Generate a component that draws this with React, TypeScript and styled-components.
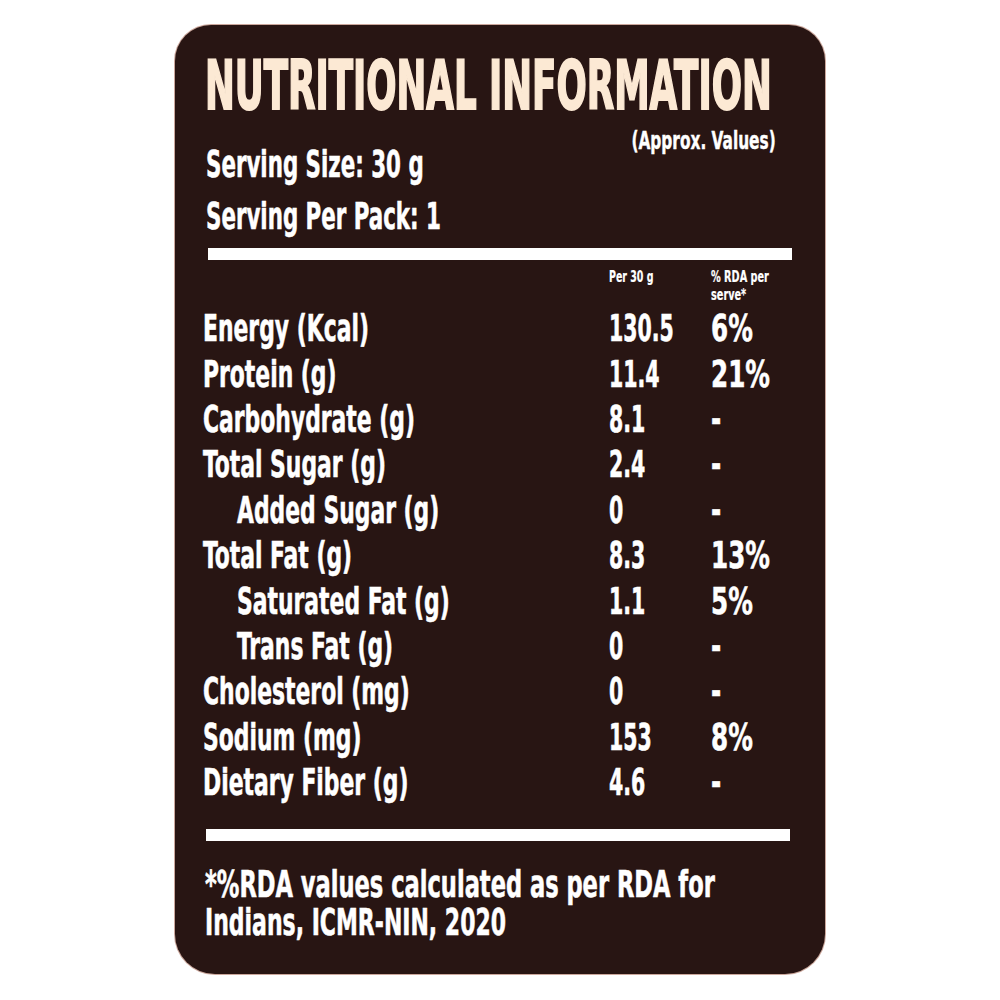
import React from "react";
import styled, { createGlobalStyle } from "styled-components";

const Global = createGlobalStyle`
  html, body { margin: 0; padding: 0; background: #ffffff; }
  body { font-family: "DejaVu Sans Condensed", "DejaVu Sans", "Liberation Sans", sans-serif; }
`;

const Page = styled.div`
  width: 1000px;
  height: 1000px;
  box-sizing: border-box;
  padding-top: 25px;
  display: flex;
  justify-content: center;
  align-items: flex-start;
`;

const Card = styled.div`
  width: 650px;
  height: 949px;
  box-sizing: border-box;
  border-radius: 36px 36px 40px 40px;
  background: #281513;
  box-shadow: 0 0 0 1px rgba(140, 60, 35, 0.45);
  padding: 28px 33px 0 28px;
  display: flex;
  flex-direction: column;
  color: #ffffff;
  font-weight: 700;
  -webkit-text-stroke: 0.6px #ffffff;
  overflow: hidden;
`;

const Squeeze = styled.span<{ $sx: number; $origin?: string }>`
  display: inline-block;
  white-space: nowrap;
  transform: scaleX(${(p) => p.$sx});
  transform-origin: ${(p) => p.$origin ?? "left"} center;
`;

const Title = styled.h1`
  margin: 0 0 0 2px;
  font-size: 67px;
  line-height: 67px;
  font-weight: 700;
  color: #fce9d4;
  -webkit-text-stroke: 2px #fce9d4;
`;

const Intro = styled.div`
  display: flex;
  justify-content: space-between;
  align-items: flex-start;
  margin-top: 8.6px;
`;

const ServingCol = styled.div`
  flex: 1;
  min-width: 0;
  padding-top: 9px;
  margin-left: 3px;
`;

const ServingLine = styled.div`
  font-size: 38px;
  line-height: 52px;
`;

const Approx = styled.div`
  flex-shrink: 0;
  font-size: 24px;
  line-height: 24px;
  margin-right: 16px;
  text-align: right;
  -webkit-text-stroke: 0.4px #ffffff;
`;

const Bar = styled.div<{ $top: number; $left: number; $h: number }>`
  margin: ${(p) => p.$top}px 0 0 ${(p) => p.$left}px;
  width: 584px;
  height: ${(p) => p.$h}px;
  background: #ffffff;
  flex-shrink: 0;
`;

const Grid = styled.div<{ $top: number }>`
  display: grid;
  grid-template-columns: 406px 102px 1fr;
  margin-top: ${(p) => p.$top}px;
`;

const HeadCell = styled.div`
  font-size: 15px;
  line-height: 18px;
  -webkit-text-stroke: 0.2px #ffffff;
`;

const Cell = styled.div<{ $indent?: boolean }>`
  font-size: 38px;
  line-height: 45.4px;
  padding-left: ${(p) => (p.$indent ? 34 : 0)}px;
`;

const Footnote = styled.div`
  margin: 24px 0 0 2px;
  font-size: 38px;
  line-height: 38.5px;
`;

const FootLine = styled.div``;

type Row = { label: string; value: string; rda: string; indent?: boolean };

const rows: Row[] = [
  { label: "Energy (Kcal)", value: "130.5", rda: "6%" },
  { label: "Protein (g)", value: "11.4", rda: "21%" },
  { label: "Carbohydrate (g)", value: "8.1", rda: "-" },
  { label: "Total Sugar (g)", value: "2.4", rda: "-" },
  { label: "Added Sugar (g)", value: "0", rda: "-", indent: true },
  { label: "Total Fat (g)", value: "8.3", rda: "13%" },
  { label: "Saturated Fat (g)", value: "1.1", rda: "5%", indent: true },
  { label: "Trans Fat (g)", value: "0", rda: "-", indent: true },
  { label: "Cholesterol (mg)", value: "0", rda: "-" },
  { label: "Sodium (mg)", value: "153", rda: "8%" },
  { label: "Dietary Fiber (g)", value: "4.6", rda: "-" },
];

export default function App() {
  return (
    <>
      <Global />
      <Page>
        <Card>
          <Title>
            <Squeeze $sx={0.591}>NUTRITIONAL INFORMATION</Squeeze>
          </Title>
          <Intro>
            <ServingCol>
              <ServingLine>
                <Squeeze $sx={0.625}>Serving Size: 30 g</Squeeze>
              </ServingLine>
              <ServingLine>
                <Squeeze $sx={0.625}>Serving Per Pack: 1</Squeeze>
              </ServingLine>
            </ServingCol>
            <Approx>
              <Squeeze $sx={0.712} $origin="right">(Approx. Values)</Squeeze>
            </Approx>
          </Intro>
          <Bar $top={6} $left={5} $h={12} />
          <Grid $top={8.5}>
            <HeadCell />
            <HeadCell>
              <Squeeze $sx={0.7}>Per 30 g</Squeeze>
            </HeadCell>
            <HeadCell>
              <Squeeze $sx={0.72}>% RDA per</Squeeze>
              <br />
              <Squeeze $sx={0.72}>serve*</Squeeze>
            </HeadCell>
          </Grid>
          <Grid $top={2}>
            {rows.map((r) => (
              <React.Fragment key={r.label}>
                <Cell $indent={r.indent}>
                  <Squeeze $sx={0.64}>{r.label}</Squeeze>
                </Cell>
                <Cell>
                  <Squeeze $sx={0.6}>{r.value}</Squeeze>
                </Cell>
                <Cell>
                  <Squeeze $sx={0.72}>{r.rda}</Squeeze>
                </Cell>
              </React.Fragment>
            ))}
          </Grid>
          <Bar $top={23} $left={3} $h={12} />
          <Footnote>
            <FootLine>
              <Squeeze $sx={0.66}>*%RDA values calculated as per RDA for</Squeeze>
            </FootLine>
            <FootLine>
              <Squeeze $sx={0.643}>Indians, ICMR-NIN, 2020</Squeeze>
            </FootLine>
          </Footnote>
        </Card>
      </Page>
    </>
  );
}
